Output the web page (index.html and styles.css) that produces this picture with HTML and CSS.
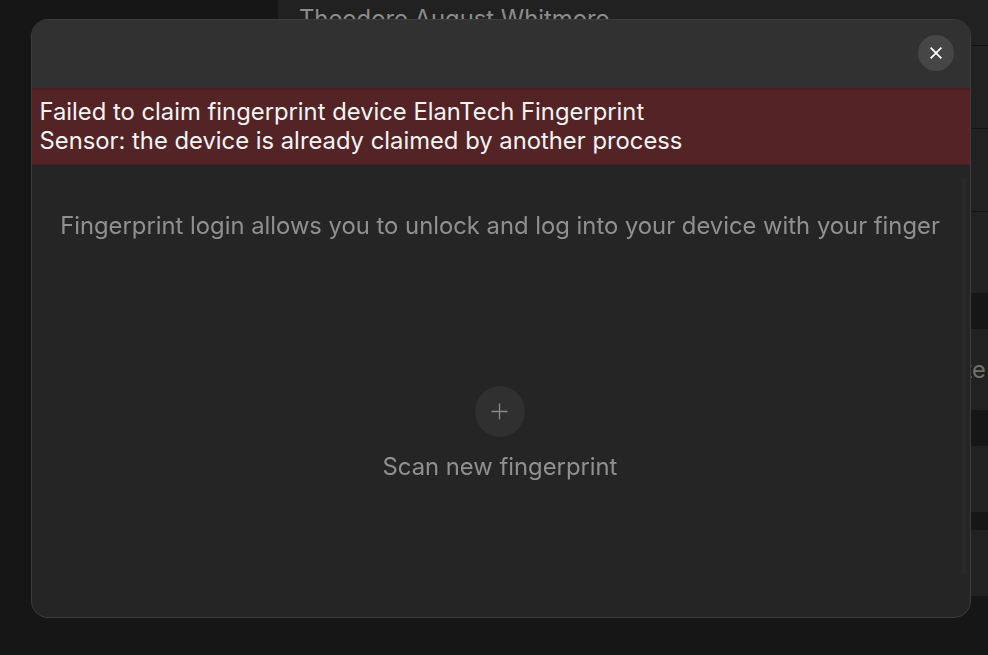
FILE: index.html
```html
<!DOCTYPE html>
<html lang="en">
<head>
    <meta charset="UTF-8">
    <meta name="viewport" content="width=device-width, initial-scale=1.0">
    <title>Fingerprint login</title>
    <link rel="stylesheet" href="styles.css">
</head>
<body>

<div class="app">
    <div class="sidebar"></div>
    <div class="content">
        <div class="row row-first">
            <span class="row-name">Theodore August Whitmore</span>
        </div>
        <div class="row row-mid"></div>
        <div class="row row-mid"></div>
        <div class="row row-last"></div>
        <div class="row row-action">
            <span class="row-link">Update</span>
        </div>
        <div class="row row-small"></div>
        <div class="row row-small row-end"></div>
    </div>
</div>

<div class="modal">
    <div class="modal-header">
        <button class="close-btn" aria-label="Close">
            <svg width="12" height="12" viewBox="0 0 12 12" fill="none" stroke="#fff" stroke-width="1.7">
                <path d="M0.6 0.6l10.8 10.8M11.4 0.6l-10.8 10.8"/>
            </svg>
        </button>
    </div>
    <div class="error-band">
        Failed to claim fingerprint device ElanTech Fingerprint<br>
        Sensor: the device is already claimed by another process
    </div>
    <div class="modal-body">
        <p class="intro">Fingerprint login allows you to unlock and log into your device with your finger</p>
        <div class="scan">
            <button class="scan-btn" aria-label="Scan new fingerprint">
                <svg width="18" height="18" viewBox="0 0 18 18" fill="none" stroke="#8a8a8a" stroke-width="1.3">
                    <path d="M8.5 0.5v16M0.5 8.5h16"/>
                </svg>
            </button>
            <span class="scan-label">Scan new fingerprint</span>
        </div>
        <div class="scroll-thumb"></div>
    </div>
</div>

</body>
</html>
```

FILE: styles.css
```css
* {
    box-sizing: border-box;
}

html, body {
    height: 100%;
    margin: 0;
    overflow: hidden;
}

body {
    font-family: Inter, "Noto Sans", sans-serif;
    background-color: #161616;
}

.app {
    display: flex;
    height: 100%;
}

.sidebar {
    width: 278px;
    background-color: #161616;
}

.content {
    flex: 1;
    display: flex;
    flex-direction: column;
    min-width: 0;
}

.row {
    background-color: #212121;
    border-bottom: 1px solid #141414;
    display: flex;
    align-items: center;
    white-space: nowrap;
    overflow: hidden;
}

.row-first {
    height: 46px;
    padding: 0 21px 12px;
    align-items: flex-start;
}

.row-mid {
    height: 83px;
}

.row-last {
    height: 81px;
    border-bottom: none;
}

.row-action {
    height: 81px;
    margin-top: 36px;
    justify-content: flex-end;
    padding-right: 2px;
    border-bottom: none;
}

.row-small {
    height: 66px;
    margin-top: 36px;
    border-bottom: none;
}

.row-end {
    margin-top: 18px;
}

.row-name {
    font-size: 23.8px;
    line-height: 29px;
    margin-top: 4px;
    color: #8c8c8c;
}

.row-link {
    font-size: 23.8px;
    color: #6f6f6f;
}

.modal {
    position: fixed;
    left: 31px;
    top: 19px;
    width: 940px;
    height: 599px;
    display: flex;
    flex-direction: column;
    background-color: #252525;
    border: 1px solid #3d3d3d;
    border-radius: 17px;
    overflow: hidden;
}

.modal-header {
    height: 68px;
    flex: none;
    display: flex;
    justify-content: flex-end;
    align-items: flex-start;
    padding: 15px 16px 0 0;
    background-color: #313131;
}

.close-btn {
    width: 36px;
    height: 36px;
    padding: 0;
    border: none;
    border-radius: 50%;
    background-color: #464646;
    display: flex;
    align-items: center;
    justify-content: center;
}

.error-band {
    height: 77px;
    flex: none;
    padding: 7px 7.5px 0;
    font-size: 23.8px;
    line-height: 29px;
    color: #f4f4f4;
    background-color: #532325;
    border-top: 2px solid #4a1f21;
    border-bottom: 1px solid #4a1f21;
}

.modal-body {
    position: relative;
    flex: 1;
    display: flex;
    flex-direction: column;
    align-items: center;
    padding-right: 2px;
}

.intro {
    margin: 46px 0 0;
    font-size: 23.8px;
    line-height: 29px;
    color: #909090;
}

.scan {
    margin-top: 146px;
    display: flex;
    flex-direction: column;
    align-items: center;
    gap: 15px;
}

.scan-btn {
    width: 50px;
    height: 51px;
    padding: 0;
    border: none;
    border-radius: 50%;
    background-color: #303030;
    display: flex;
    align-items: center;
    justify-content: center;
}

.scan-label {
    font-size: 23.8px;
    line-height: 29px;
    color: #909090;
}

.scroll-thumb {
    position: absolute;
    top: 13px;
    right: 4px;
    width: 4px;
    height: 396px;
    border-radius: 2px;
    background-color: #2a2a2a;
}
```
